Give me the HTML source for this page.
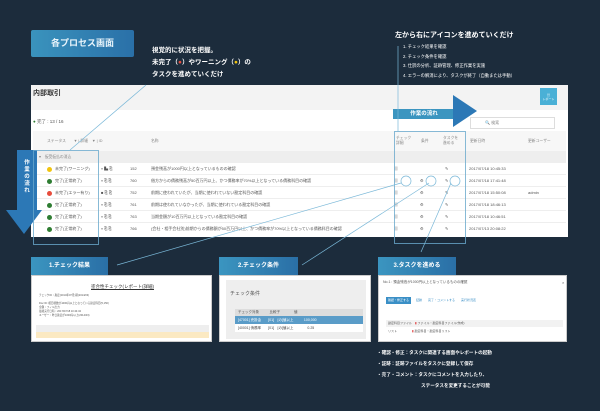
<!DOCTYPE html>
<html><head><meta charset="utf-8"><style>
*{margin:0;padding:0;box-sizing:border-box}
body{width:600px;height:411px;background:#1c2c3c;position:relative;overflow:hidden;font-family:"Liberation Sans","Noto Sans CJK JP",sans-serif;color:#fff}
.a{position:absolute}
.btn{left:31px;top:30px;width:103px;height:27px;background:linear-gradient(90deg,#3a93bd,#2a70a8);border-radius:2px;font-size:9px;font-weight:bold;text-align:center;line-height:27px;color:#e8f4fb}
.note{font-size:6.5px;font-weight:bold;line-height:12px}
.panel{left:31px;top:85px;width:537px;height:152px;background:#fff}
.row{position:absolute;left:2px;width:533px;height:12px;font-size:4px;color:#555;line-height:12px;border-bottom:1px solid #eee}
.row span{position:absolute}
.dot{width:5px;height:5px;border-radius:50%;top:3.5px}
.tab{top:257px;height:18px;background:linear-gradient(90deg,#3b95c0,#2a6fa6);font-size:6px;font-weight:bold;text-align:center;line-height:18px}
.sp{top:275px;height:67px;background:#fff;border:1px solid #ccc}
.bul{left:377px;font-size:4.6px;font-weight:bold;line-height:11px}
</style></head><body>
<div class="a btn">各プロセス画面</div>
<div class="a note" style="left:152px;top:45px">視覚的に状況を把握。<br>未完了（<span style="color:#e74c3c">●</span>）やワーニング（<span style="color:#f1c40f">●</span>）の<br>タスクを進めていくだけ</div>
<div class="a" style="left:395px;top:30px;font-size:7px;font-weight:bold">左から右にアイコンを進めていくだけ</div>
<div class="a" style="left:403px;top:42px;font-size:4.3px;line-height:9.7px">1. チェック結果を確認<br>2. チェック条件を確認<br>3. 仕訳の分析、証跡管理、修正作業を実施<br>4. エラーの解消により、タスクが終了（自動または手動）</div>

<div class="a panel">
 <div class="a" style="left:0;top:0;width:537px;height:25px;background:#f3f3f3"></div>
 <div class="a" style="left:2px;top:3px;font-size:7px;font-weight:bold;color:#333">内部取引</div>
 <div class="a" style="left:509px;top:3px;width:17px;height:17px;background:#4ab0d6;font-size:3px;text-align:center;padding-top:5px">▤<br>レポート</div>
 <div class="a" style="left:2px;top:34px;font-size:4.5px;color:#555"><span style="color:#2e7d32">●</span> 完了 : 13 / 16</div>
 <div class="a" style="left:439px;top:32px;width:85px;height:12px;border:1px solid #ddd;font-size:4px;color:#888;line-height:10px;padding-left:14px">🔍 検索</div>
 <div class="a" style="left:2px;top:46px;width:533px;height:20px;background:#f7f7f7;font-size:3.8px;color:#888">
  <span class="a" style="left:14px;top:8px">ステータス　　▼ | 詳細　▼ | ID</span>
  <span class="a" style="left:118px;top:8px">名称</span>
  <span class="a" style="left:363px;top:5px">チェック<br>詳細</span><span class="a" style="left:388px;top:8px">条件</span><span class="a" style="left:410px;top:5px">タスクを<br>進める</span>
  <span class="a" style="left:437px;top:8px">更新日時</span><span class="a" style="left:495px;top:8px">更新ユーザー</span>
 </div>
 <div class="a" style="left:2px;top:66px;width:533px;height:12px;background:#eee;font-size:3.8px;color:#888;line-height:12px;padding-left:6px">▾　仮受仮払の消込</div>
 <div class="row" style="top:78px"><span class="dot" style="left:14px;background:#f1c40f"></span><span style="left:22px">未完了(ワーニング)</span><span style="left:68px">▿ ▙ ⎘</span><span style="left:97px">152</span><span style="left:118px">預金残高が1000円以上となっているものの確認</span><span style="left:361px">▥</span><span style="left:412px">✎</span><span style="left:436px">2017/07/18 10:45:33</span></div>
 <div class="row" style="top:90px"><span class="dot" style="left:14px;background:#2e7d32"></span><span style="left:22px">完了(正常終了)</span><span style="left:68px">▿ ⎘ ⎘</span><span style="left:97px">760</span><span style="left:118px">借方からの債務残高が50百万円以上、かつ債務率が70%以上となっている債務科目の確認</span><span style="left:361px">▥</span><span style="left:387px">⚙</span><span style="left:412px">✎</span><span style="left:436px">2017/07/18 17:41:48</span></div>
 <div class="row" style="top:102px"><span class="dot" style="left:14px;background:#e74c3c"></span><span style="left:22px">未完了(エラー有り)</span><span style="left:68px">■ ⎘ ⎘</span><span style="left:97px">752</span><span style="left:118px">前期に使われていたが、当期に使われていない勘定科目の確認</span><span style="left:361px">▥</span><span style="left:387px">⚙</span><span style="left:412px">✎</span><span style="left:436px">2017/07/18 15:50:08</span><span style="left:495px">admin</span></div>
 <div class="row" style="top:114px"><span class="dot" style="left:14px;background:#2e7d32"></span><span style="left:22px">完了(正常終了)</span><span style="left:68px">▿ ⎘ ⎘</span><span style="left:97px">761</span><span style="left:118px">前期は使われていなかったが、当期に使われている勘定科目の確認</span><span style="left:361px">▥</span><span style="left:387px">⚙</span><span style="left:412px">✎</span><span style="left:436px">2017/07/18 18:46:13</span></div>
 <div class="row" style="top:126px"><span class="dot" style="left:14px;background:#2e7d32"></span><span style="left:22px">完了(正常終了)</span><span style="left:68px">▿ ⎘ ⎘</span><span style="left:97px">763</span><span style="left:118px">当期金額が10百万円以上となっている勘定科目の確認</span><span style="left:361px">▥</span><span style="left:387px">⚙</span><span style="left:412px">✎</span><span style="left:436px">2017/07/18 10:46:51</span></div>
 <div class="row" style="top:138px;border:none"><span class="dot" style="left:14px;background:#2e7d32"></span><span style="left:22px">完了(正常終了)</span><span style="left:68px">▿ ⎘ ⎘</span><span style="left:97px">766</span><span style="left:118px">(会社・相手会社別)前期からの債務額が50百万円以上、かつ債務率が70%以上となっている債務科目の確認</span><span style="left:361px">▥</span><span style="left:387px">⚙</span><span style="left:412px">✎</span><span style="left:436px">2017/07/13 20:08:22</span></div>
</div>

<div class="a" style="left:393px;top:109px;width:62px;height:10px;background:#3b95c0;font-size:5.5px;font-weight:bold;text-align:center;line-height:10px">作業の流れ</div>
<svg class="a" style="left:0;top:0" width="600" height="411">
 <polygon points="453,95 477,111 453,127" fill="#2c78b6"/>
 <rect x="17" y="150" width="20" height="62" fill="#2c78b6"/>
 <polygon points="6,210 42,210 24,234" fill="#2c78b6"/>
 <rect x="33.5" y="150.5" width="65" height="94" fill="none" stroke="#6aa9cc" stroke-width="0.8"/>
 <rect x="394.5" y="131.5" width="71" height="112" fill="none" stroke="#6aa9cc" stroke-width="0.8"/>
 <g stroke="#7ab8d8" stroke-width="0.7" fill="none">
  <line x1="146" y1="85" x2="70" y2="150"/>
  <line x1="398" y1="46" x2="398" y2="131"/>
  <line x1="401" y1="183" x2="117" y2="265"/>
  <line x1="429" y1="183" x2="302" y2="265"/>
  <line x1="451" y1="183" x2="421" y2="252"/>
  <circle cx="406" cy="181" r="5"/><circle cx="431" cy="181" r="5"/><circle cx="455" cy="181" r="5"/>
 </g>
</svg>
<div class="a" style="left:19px;top:160px;width:16px;font-size:5.5px;font-weight:bold;text-align:center;line-height:7px">作<br>業<br>の<br>流<br>れ</div>

<div class="a tab" style="left:31px;width:77px">1.チェック結果</div>
<div class="a sp" style="left:31px;width:181px">
 <div class="a" style="left:0;top:8px;width:181px;text-align:center;font-size:4.5px;color:#333;text-decoration:underline">塗合性チェック(レポート(詳細)</div>
 <div class="a" style="left:7px;top:18px;font-size:2.6px;color:#555;line-height:4px">チェックID：勘定(2014年07月)期(2014/03)<br><br>Doc ID: 相目標数が1000円以上となっている勘定科目(5,150)<br>金額：フィル出力<br>最終実行日時：2017/07/18 10:44:34<br>ユーザー：昨日勘定が1000円以上(2014/03)</div>
 <div class="a" style="left:4px;top:49px;width:173px;height:7px;background:#eee"></div>
 <div class="a" style="left:4px;top:56px;width:173px;height:6px;background:#fbe9c2"></div>
</div>
<div class="a tab" style="left:219px;width:79px">2.チェック条件</div>
<div class="a sp" style="left:219px;width:152px">
 <div class="a" style="left:6px;top:4px;width:140px;height:59px;background:#eee"></div>
 <div class="a" style="left:10px;top:14px;font-size:5px;color:#555">チェック条件</div>
 <div class="a" style="left:15px;top:33px;width:128px;height:7px;background:#ddd;font-size:3.5px;color:#555;line-height:7px;padding-left:3px">チェック対象　　　比較子　　　　値</div>
 <div class="a" style="left:15px;top:40px;width:128px;height:8px;background:#5a9cc8;font-size:3.5px;line-height:8px;padding-left:3px">[47001] 売掛金　　[01]　[の]値以上　　　100,000</div>
 <div class="a" style="left:15px;top:48px;width:128px;height:8px;background:#fff;font-size:3.5px;color:#444;line-height:8px;padding-left:3px">[40001] 債務率　　[01]　[の]値以上　　　　0.25</div>
</div>
<div class="a tab" style="left:378px;width:78px">3.タスクを進める</div>
<div class="a sp" style="left:378px;width:189px;color:#555">
 <div class="a" style="left:4px;top:4px;font-size:3.5px">No.1 : 預金残高が1000円以上となっているものの確認</div>
 <div class="a" style="left:183px;top:4px;font-size:4px">×</div>
 <div class="a" style="left:7px;top:21px;width:25px;height:7px;background:#3a8fc6;font-size:3px;color:#fff;line-height:7px;text-align:center">確認・修正する</div>
 <div class="a" style="left:37px;top:22px;font-size:3px;color:#3a8fc6">証跡　　完了・コメントする　　実行状況表</div>
 <div class="a" style="left:7px;top:44px;width:177px;height:7px;background:#f2f2f2;font-size:3px;line-height:7px;padding-left:2px">勘定科目ファイル　<span style="color:#d33">▮</span> ファイル・勘定科目ファイル(作成)</div>
 <div class="a" style="left:7px;top:52px;width:177px;height:7px;font-size:3px;line-height:7px;padding-left:2px">リスト　　　　　<span style="color:#d33">▮</span> 勘定科目・勘定科目リスト</div>
</div>
<div class="a bul" style="top:347px">・確認・修正：タスクに関連する画面やレポートの起動<br>・証跡：証跡ファイルをタスクに登録して保存<br>・完了・コメント：タスクにコメントを入力したり、<br><span style="padding-left:44px">ステータスを変更することが可能</span></div>
</body></html>
